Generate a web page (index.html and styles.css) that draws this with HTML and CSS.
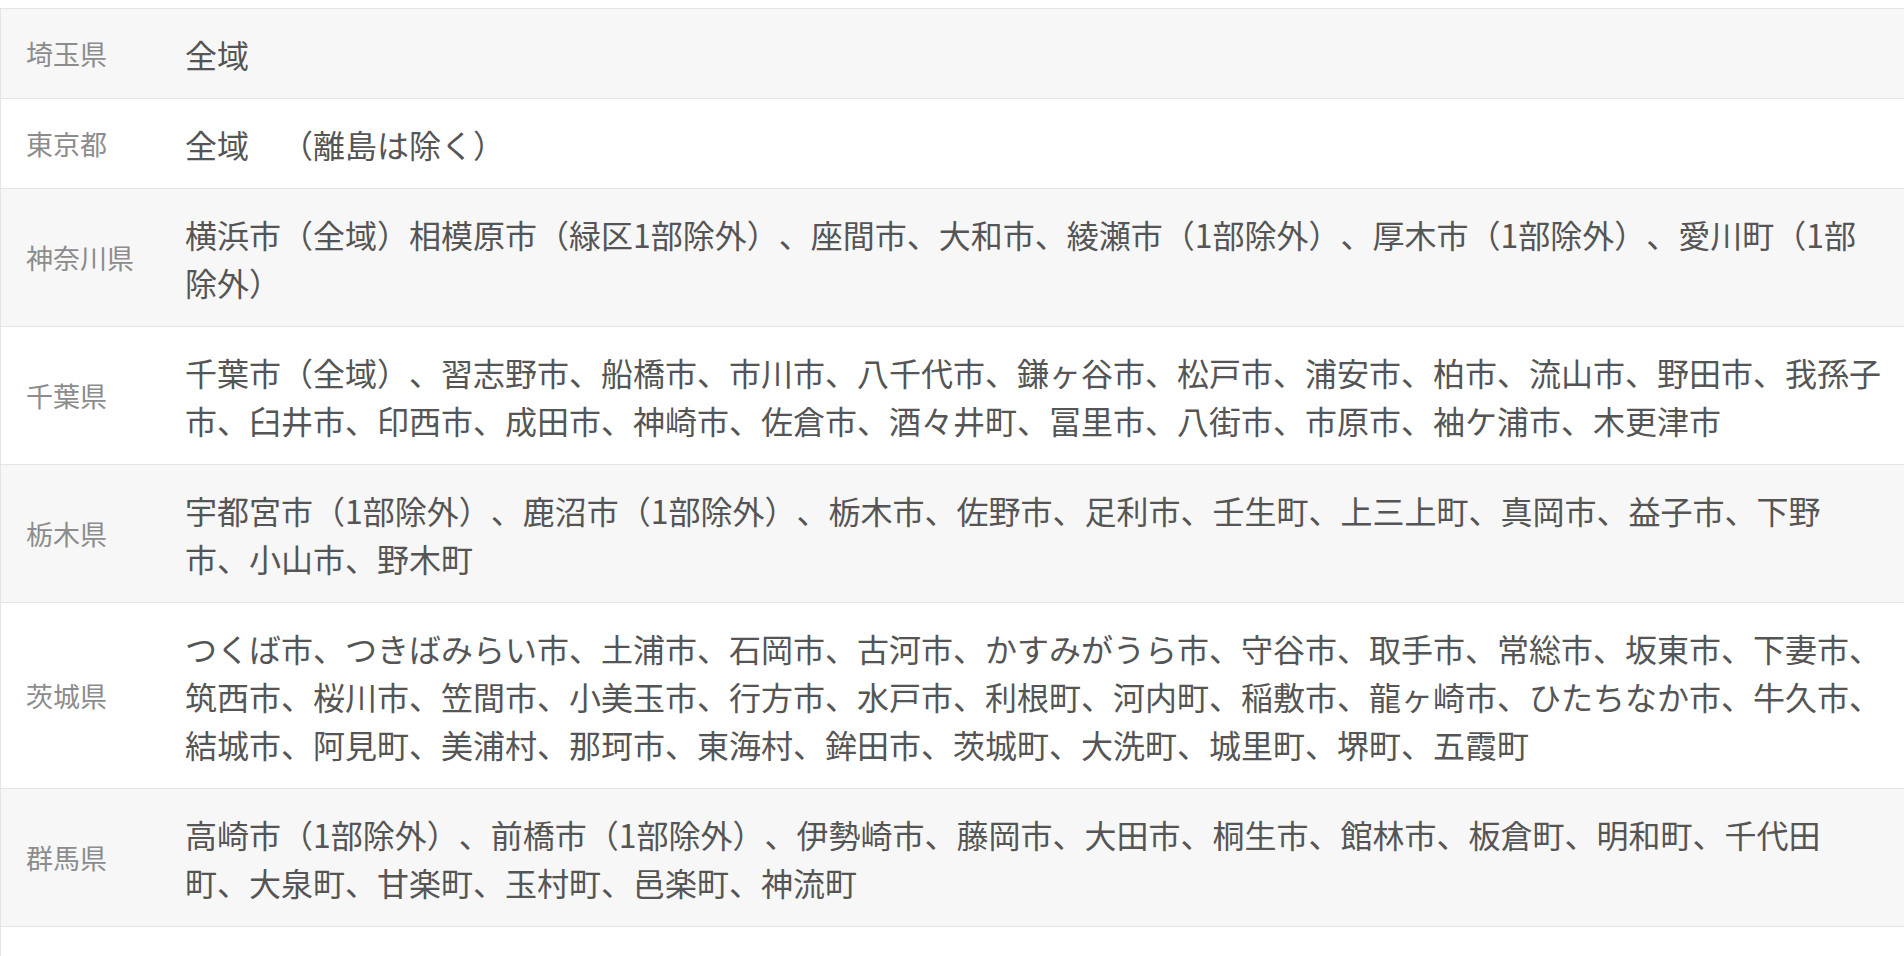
FILE: index.html
```html
<!DOCTYPE html>
<html lang="ja">
<head>
<meta charset="utf-8">
<title>対応エリア</title>
<link rel="stylesheet" href="styles.css">
</head>
<body>
<table class="area-table">
  <tbody>
    <tr class="row-shaded">
      <th class="pref">埼玉県</th>
      <td class="cities">全域</td>
    </tr>
    <tr>
      <th class="pref">東京都</th>
      <td class="cities">全域　（離島は除く）</td>
    </tr>
    <tr class="row-shaded">
      <th class="pref">神奈川県</th>
      <td class="cities">横浜市（全域）相模原市（緑区1部除外）、座間市、大和市、綾瀬市（1部除外）、厚木市（1部除外）、愛川町（1部除外）</td>
    </tr>
    <tr>
      <th class="pref">千葉県</th>
      <td class="cities">千葉市（全域）、習志野市、船橋市、市川市、八千代市、鎌ヶ谷市、松戸市、浦安市、柏市、流山市、野田市、我孫子市、臼井市、印西市、成田市、神崎市、佐倉市、酒々井町、冨里市、八街市、市原市、袖ケ浦市、木更津市</td>
    </tr>
    <tr class="row-shaded">
      <th class="pref">栃木県</th>
      <td class="cities">宇都宮市（1部除外）、鹿沼市（1部除外）、栃木市、佐野市、足利市、壬生町、上三上町、真岡市、益子市、下野市、小山市、野木町</td>
    </tr>
    <tr>
      <th class="pref">茨城県</th>
      <td class="cities">つくば市、つきばみらい市、土浦市、石岡市、古河市、かすみがうら市、守谷市、取手市、常総市、坂東市、下妻市、筑西市、桜川市、笠間市、小美玉市、行方市、水戸市、利根町、河内町、稲敷市、龍ヶ崎市、ひたちなか市、牛久市、結城市、阿見町、美浦村、那珂市、東海村、鉾田市、茨城町、大洗町、城里町、堺町、五霞町</td>
    </tr>
    <tr class="row-shaded">
      <th class="pref">群馬県</th>
      <td class="cities">高崎市（1部除外）、前橋市（1部除外）、伊勢崎市、藤岡市、大田市、桐生市、館林市、板倉町、明和町、千代田町、大泉町、甘楽町、玉村町、邑楽町、神流町</td>
    </tr>
    <tr>
      <th class="pref"></th>
      <td class="cities">&nbsp;</td>
    </tr>
  </tbody>
</table>
</body>
</html>
```

FILE: styles.css
```css
html, body {
  margin: 0;
  padding: 0;
  background: #ffffff;
}

body {
  font-family: "Noto Sans CJK JP", "Noto Sans", sans-serif;
  text-spacing-trim: space-all;
}

.area-table {
  width: 100%;
  margin-top: 8px;
  border-collapse: separate;
  border-spacing: 0;
  border-left: 1px solid #e4e4e4;
  table-layout: fixed;
}

.area-table tr {
  background: #ffffff;
}

.area-table tr.row-shaded {
  background: #f7f7f7;
}

.pref,
.cities {
  border-top: 1px solid #e4e4e4;
}

.pref {
  box-sizing: border-box;
  width: 184px;
  padding: 0 0 0 25px;
  text-align: left;
  vertical-align: middle;
  font-weight: normal;
  font-size: 27px;
  line-height: 40px;
  color: #8c8c8c;
}

.cities {
  padding: 21px 21px 20px 0;
  vertical-align: middle;
  font-size: 32px;
  line-height: 48px;
  color: #555555;
  text-spacing-trim: space-all;
}
```
